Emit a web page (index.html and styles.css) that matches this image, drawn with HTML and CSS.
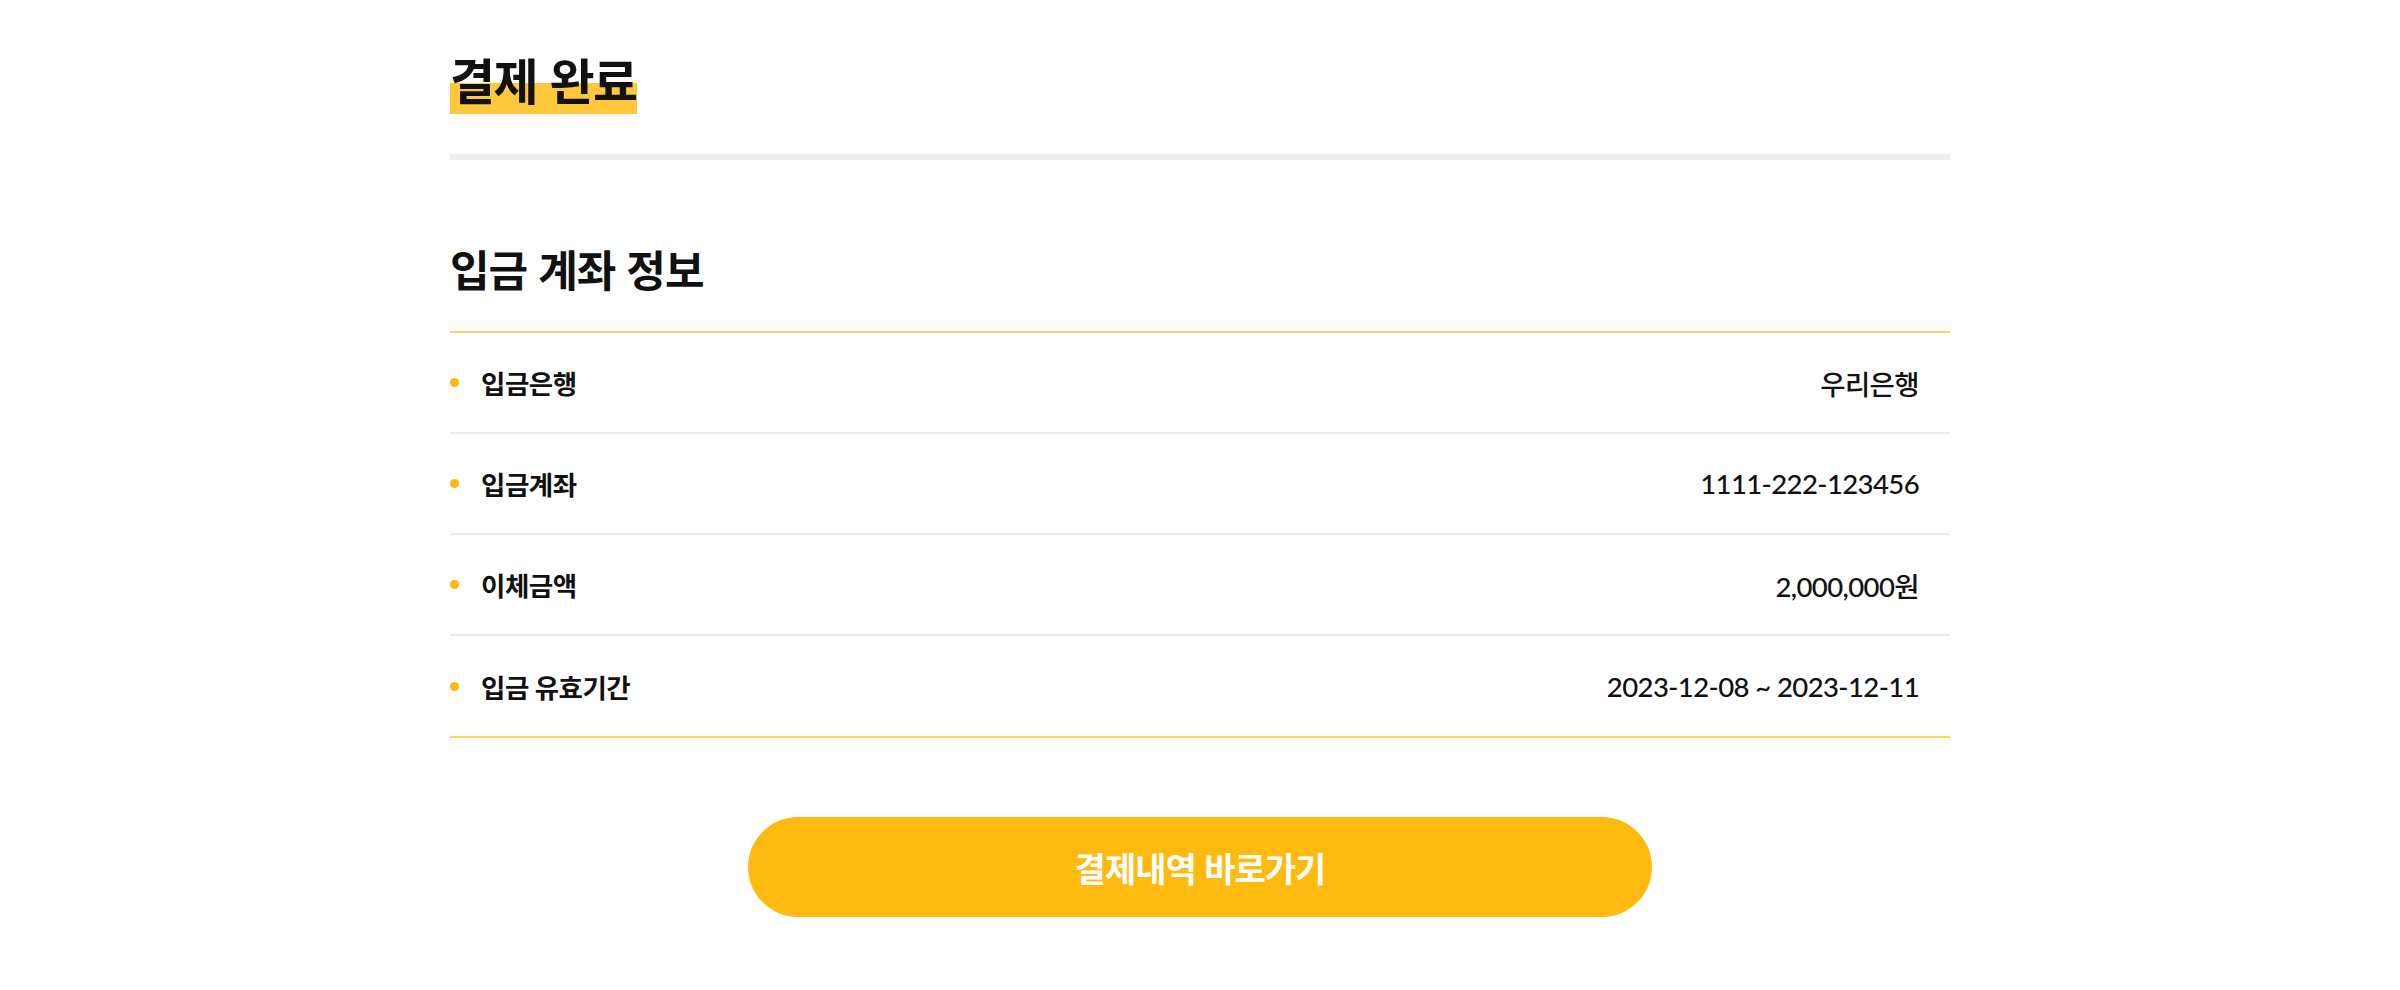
FILE: index.html
```html
<!DOCTYPE html>
<html lang="ko">
<head>
<meta charset="utf-8">
<title>결제 완료</title>
<link rel="stylesheet" href="styles.css">
</head>
<body>
<main class="page">
  <header class="page-head">
    <h1 class="page-title"><span class="hl">결제 완료</span></h1>
  </header>
  <section class="account">
    <h2 class="section-title">입금 계좌 정보</h2>
    <ul class="info-list">
      <li class="info-row"><span class="label">입금은행</span><span class="value">우리은행</span></li>
      <li class="info-row"><span class="label">입금계좌</span><span class="value">1111-222-123456</span></li>
      <li class="info-row"><span class="label">이체금액</span><span class="value">2,000,000원</span></li>
      <li class="info-row"><span class="label">입금 유효기간</span><span class="value">2023-12-08 ~ 2023-12-11</span></li>
    </ul>
  </section>
  <div class="actions">
    <a class="btn-primary" href="#">결제내역 바로가기</a>
  </div>
</main>
</body>
</html>
```
FILE: styles.css
```css
* { box-sizing: border-box; }
html, body { margin: 0; padding: 0; background: #fff; }
body {
  font-family: "Lato", "Noto Sans CJK KR", sans-serif;
  color: #111;
}
.page {
  width: 1500px;
  margin: 0 auto;
  padding-top: 44px;
}
.page-head {
  border-bottom: 6px solid #eeeeee;
  padding-bottom: 40px;
}
.page-title {
  margin: 0;
  font-family: "Noto Sans CJK KR", sans-serif;
  font-size: 49px;
  font-weight: 700;
  letter-spacing: -1.5px;
  line-height: 70px;
}
.hl {
  display: inline-block;
  line-height: 70px;
  background: linear-gradient(to bottom, transparent 56%, #ffc83c 56%);
}
.section-title {
  margin: 80px 0 0;
  font-family: "Noto Sans CJK KR", sans-serif;
  font-size: 43px;
  font-weight: 700;
  letter-spacing: -1px;
  line-height: 56px;
  padding-bottom: 35px;
  border-bottom: 2px solid #ffd25e;
}
.info-list {
  list-style: none;
  margin: 0;
  padding: 0;
  border-bottom: 2px solid #ffd25e;
}
.info-row {
  display: flex;
  align-items: center;
  justify-content: space-between;
  height: 101px;
  padding: 0 31px 0 0;
  border-bottom: 2px solid #ebebeb;
}
.info-row:last-child { border-bottom: 0; height: 100px; }
.label {
  display: flex;
  align-items: center;
  gap: 22px;
  font-size: 26.5px;
  font-weight: 700;
  letter-spacing: -0.5px;
}
.label::before {
  content: "";
  width: 9px;
  height: 9px;
  border-radius: 50%;
  background: #ffb703;
}
.value {
  font-size: 27.5px;
  font-weight: 500;
  letter-spacing: -0.6px;
}
.actions {
  display: flex;
  justify-content: center;
  padding-top: 79px;
}
.btn-primary {
  display: flex;
  align-items: center;
  justify-content: center;
  width: 904px;
  height: 100px;
  border-radius: 50px;
  background: #ffba0f;
  color: #fff;
  text-decoration: none;
  font-family: "Noto Sans CJK KR", sans-serif;
  font-size: 34px;
  font-weight: 700;
  letter-spacing: -1px;
}
```
